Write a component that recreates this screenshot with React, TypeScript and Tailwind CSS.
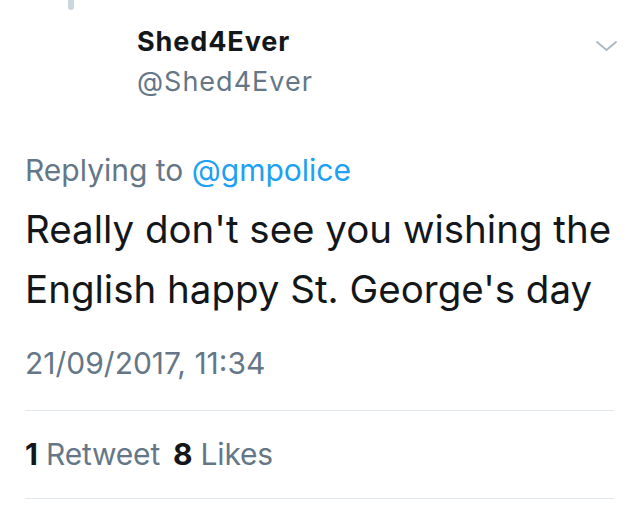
export default function App() {
  return (
    <div className="w-[639px] h-[510px] bg-white overflow-hidden font-['Inter',sans-serif] text-[#14171a]">
      <div className="ml-[68px] w-[6px] h-[10px] rounded-b-full bg-[#ccd6dd]" />
      <div className="flex items-start justify-between pl-[137px] pr-[22px] pt-[12px]">
        <div className="flex flex-col">
          <span className="text-[27px] leading-[40px] font-bold tracking-[0.9px]">Shed4Ever</span>
          <span className="text-[27px] leading-[40px] text-[#657786] tracking-[1px]">@Shed4Ever</span>
        </div>
        <svg width="21" height="10" viewBox="0 0 21 10" className="mt-[19px]" fill="none">
          <path d="M1 1 L10.5 9 L20 1" stroke="#aab8c2" strokeWidth="1.8" strokeLinecap="round" strokeLinejoin="round" />
        </svg>
      </div>
      <div className="px-[25px] pt-[48px]">
        <p className="text-[30px] leading-[40px] text-[#657786]">
          Replying to <span className="text-[#1da1f2]">@gmpolice</span>
        </p>
        <p className="mt-[9px] text-[38.5px] leading-[60px]">
          Really don't see you wishing the English happy St. George's day
        </p>
        <p className="mt-[24px] text-[30px] leading-[40px] text-[#657786]">21/09/2017, 11:34</p>
        <div className="mt-[27px] border-t border-[#e1e8ed]" />
        <div className="pt-[23px] pb-[24px] text-[30px] leading-[40px] tracking-[-0.2px] flex gap-[13px]">
          <span>
            <span className="font-bold">1</span> <span className="text-[#657786]">Retweet</span>
          </span>
          <span>
            <span className="font-bold">8</span> <span className="text-[#657786]">Likes</span>
          </span>
        </div>
        <div className="border-t border-[#e1e8ed]" />
      </div>
    </div>
  );
}
